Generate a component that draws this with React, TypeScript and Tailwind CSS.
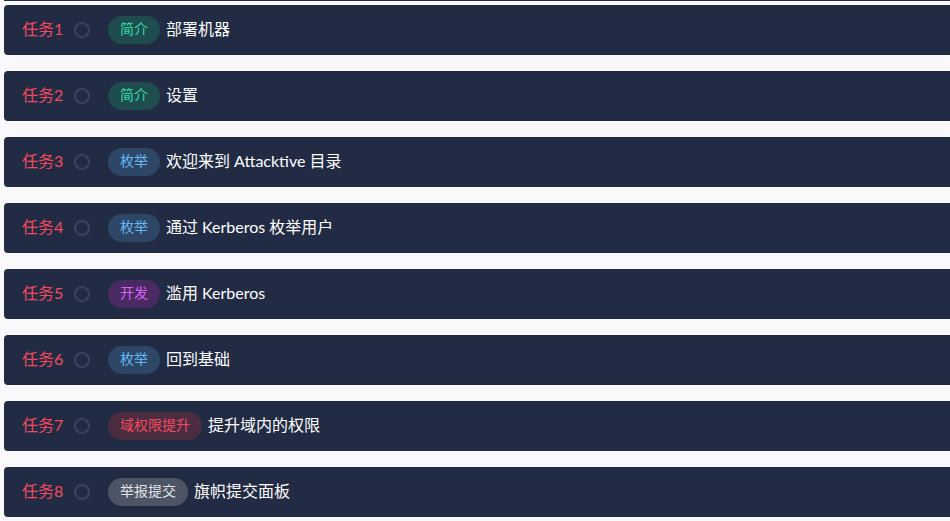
import React from 'react';

type Tag = 'intro' | 'enum' | 'exploit' | 'privesc' | 'submit';

const tagStyles: Record<Tag, string> = {
  intro: 'bg-[#1f4d4e] text-[#33dba9]',
  enum: 'bg-[#2e4766] text-[#63b8f5]',
  exploit: 'bg-[#4a2a62] text-[#d862f5]',
  privesc: 'bg-[#4a2d40] text-[#f5495e]',
  submit: 'bg-[#4d5464] text-[#e2e4e8]',
};

const tasks: { n: number; tag: Tag; label: string; title: string }[] = [
  { n: 1, tag: 'intro', label: '简介', title: '部署机器' },
  { n: 2, tag: 'intro', label: '简介', title: '设置' },
  { n: 3, tag: 'enum', label: '枚举', title: '欢迎来到 Attacktive 目录' },
  { n: 4, tag: 'enum', label: '枚举', title: '通过 Kerberos 枚举用户' },
  { n: 5, tag: 'exploit', label: '开发', title: '滥用 Kerberos' },
  { n: 6, tag: 'enum', label: '枚举', title: '回到基础' },
  { n: 7, tag: 'privesc', label: '域权限提升', title: '提升域内的权限' },
  { n: 8, tag: 'submit', label: '举报提交', title: '旗帜提交面板' },
];

export default function App() {
  return (
    <div
      className="w-[950px] h-[521px] overflow-hidden bg-[#f9f8fb]"
      style={{ fontFamily: 'Lato, "Noto Sans CJK SC", sans-serif' }}
    >
      <div className="h-px bg-[#222b44] ml-1" />
      <div className="flex flex-col gap-4 pl-1 pt-1 -mr-6">
        {tasks.map((t) => (
          <div
            key={t.n}
            className="h-[50px] bg-[#222b44] rounded flex items-center pl-[18px] leading-none"
          >
            <span className="text-[#f5495e] text-[16px] w-[40px] whitespace-nowrap -mt-[3px]">任务{t.n}</span>
            <span className="w-4 h-4 rounded-full border-2 border-[#3a4459] ml-3" />
            <span
              className={`ml-[18px] h-[28px] pb-[2px] px-3 rounded-full flex items-center text-[14px] ${tagStyles[t.tag]}`}
            >
              {t.label}
            </span>
            <span className="ml-[6px] text-white text-[16px] -mt-[3px]">{t.title}</span>
          </div>
        ))}
      </div>
    </div>
  );
}
